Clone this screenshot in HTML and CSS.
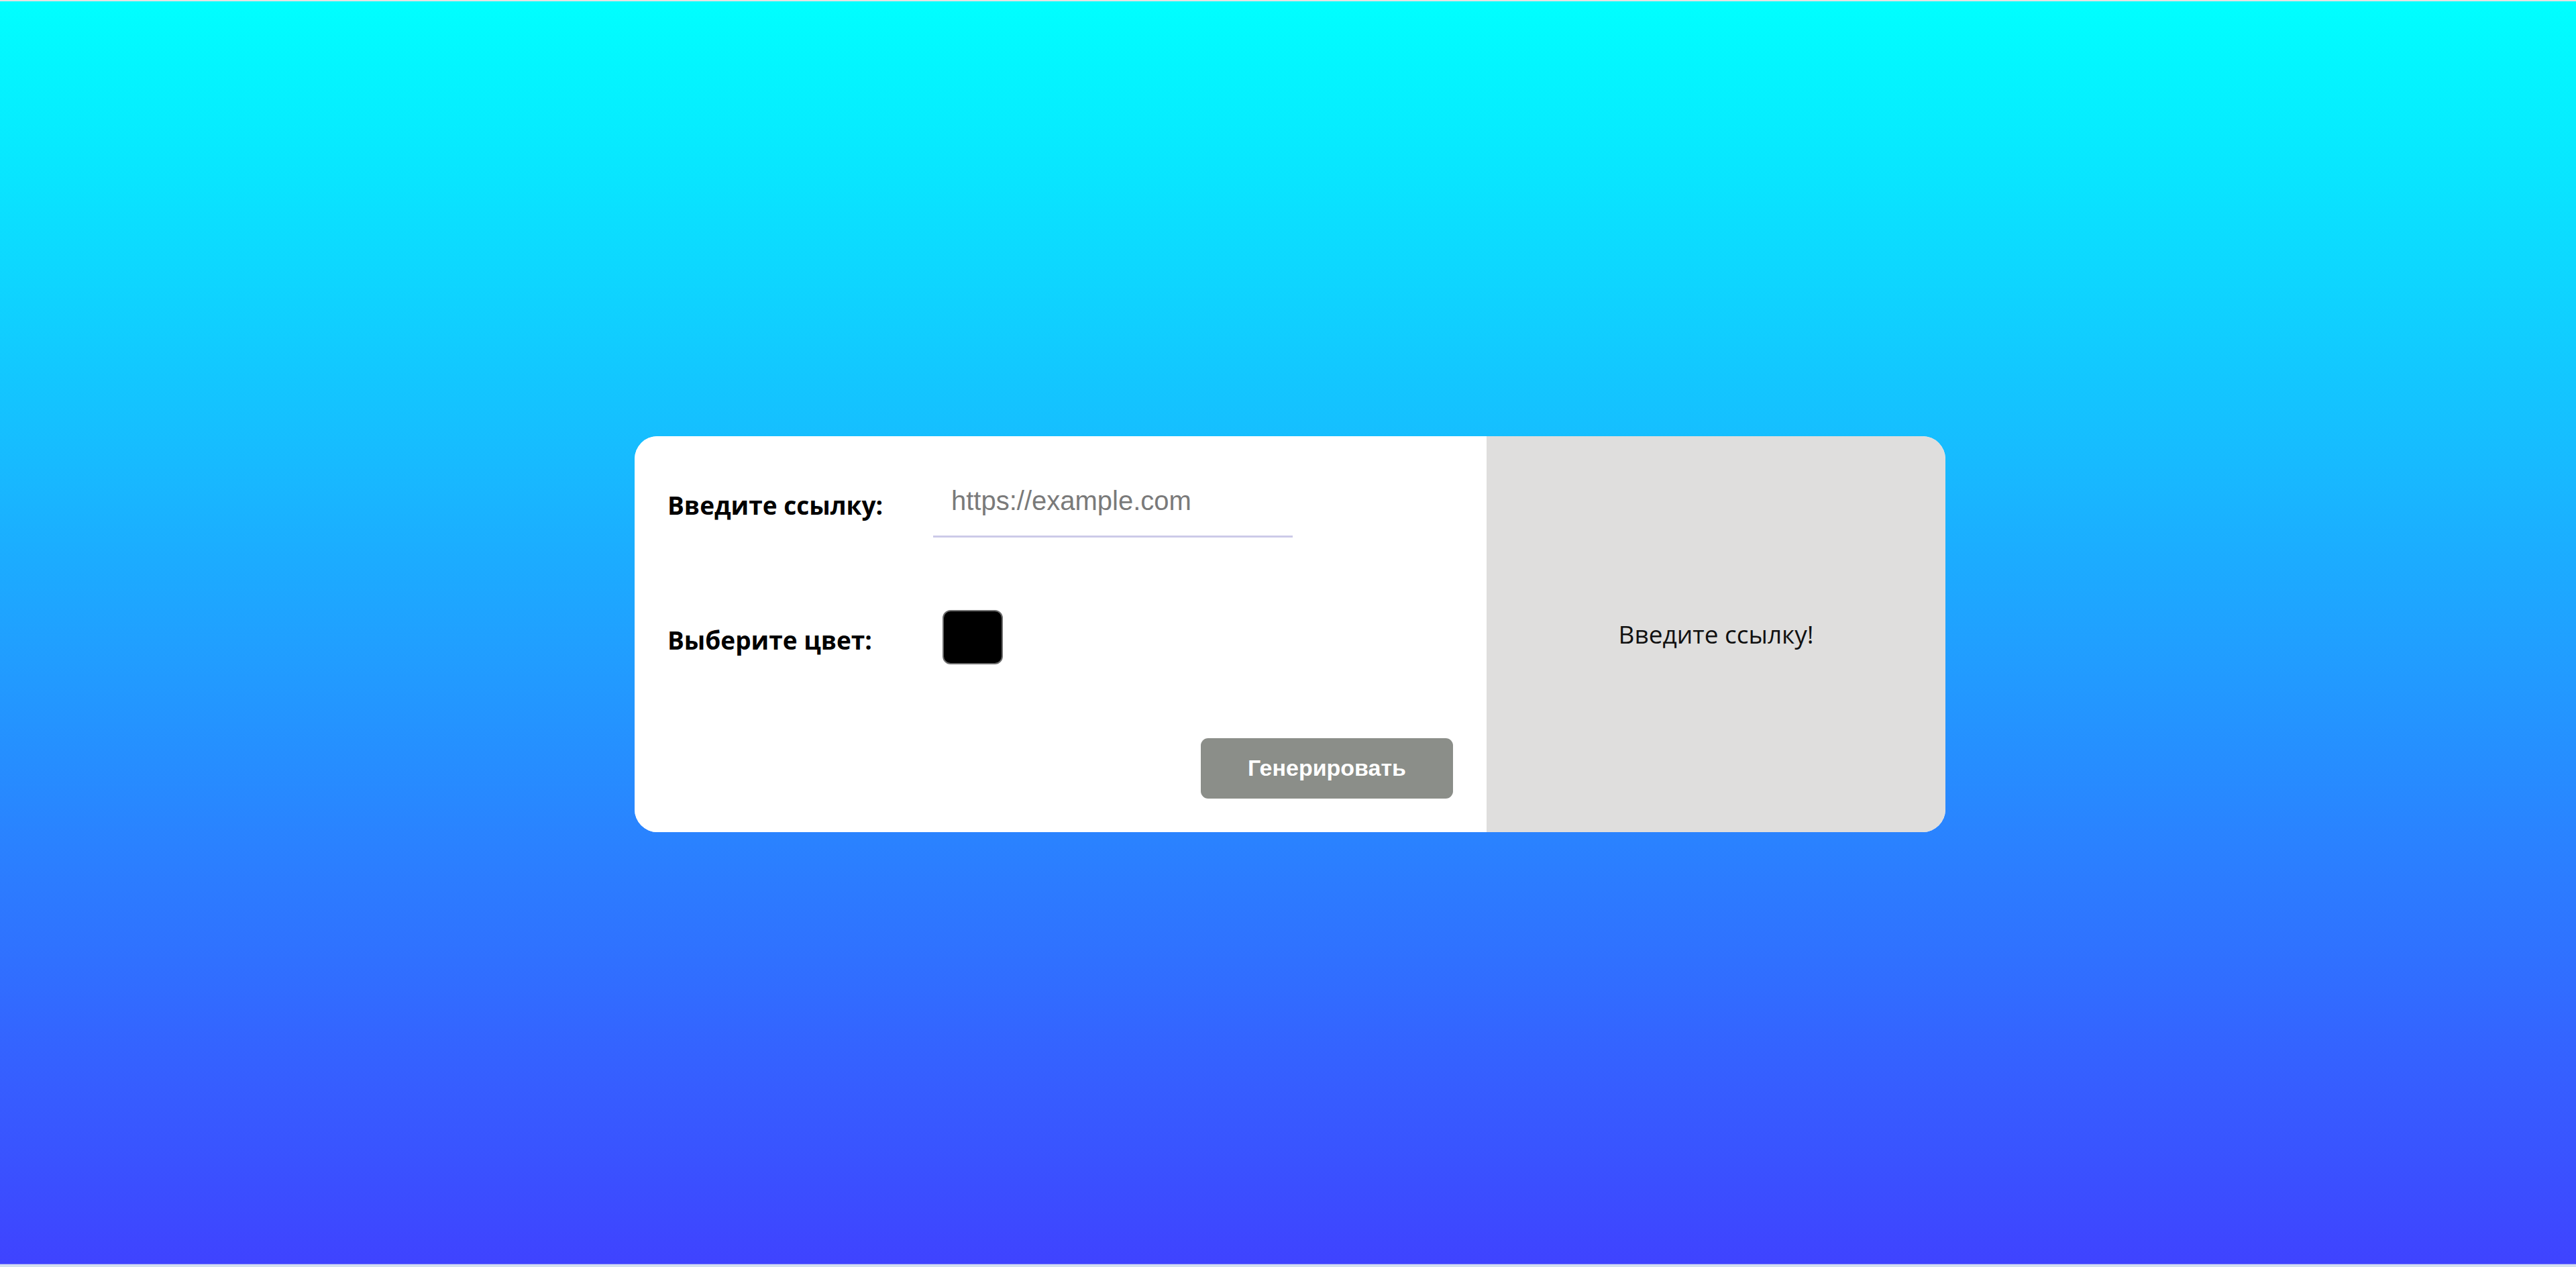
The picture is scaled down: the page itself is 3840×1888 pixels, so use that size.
FILE: index.html
```html
<!DOCTYPE html>
<html lang="ru">
<head>
<meta charset="utf-8">
<title>QR генератор</title>
<link rel="stylesheet" href="styles.css">
</head>
<body>
<div class="page">
  <div class="strip-top"></div>
  <main class="stage">
    <section class="card">
      <form class="form">
        <div class="row row-link">
          <label class="label" for="link">Введите ссылку:</label>
          <input class="link-input" id="link" type="text" placeholder="https://example.com">
        </div>
        <div class="row row-color">
          <label class="label">Выберите цвет:</label>
          <span class="swatch"></span>
        </div>
        <button type="button" class="btn">Генерировать</button>
      </form>
      <div class="result">Введите ссылку!</div>
    </section>
  </main>
  <div class="strip-bottom"></div>
</div>
</body>
</html>
```

FILE: styles.css
```css
* { box-sizing: border-box; }
html, body { margin: 0; padding: 0; }
body { font-family: "Open Sans", "Noto Sans", sans-serif; }

.page {
  height: 1888px;
  display: flex;
  flex-direction: column;
}
.strip-top { height: 2px; background: #e2e2e2; }
.strip-bottom { height: 5px; background: linear-gradient(#6a6cff 0 1px, #d4dff0 1px); }

.stage {
  flex: 1;
  display: flex;
  align-items: center;
  justify-content: center;
  background: linear-gradient(to bottom, #00ffff, #3f43ff);
  padding: 4px 0 0 6px;
}

.card {
  width: 1954px;
  height: 590px;
  display: flex;
  border-radius: 34px;
  overflow: hidden;
  background: #ffffff;
}

.form {
  width: 1270px;
  padding: 65px 50px 50px 49px;
  display: flex;
  flex-direction: column;
  background: #ffffff;
}

.row {
  display: grid;
  grid-template-columns: 396px 1fr;
  align-items: center;
}
.row-link { height: 86px; }
.row-color { margin-top: 108px; height: 81px; }

.label {
  font-family: "Open Sans", "Noto Sans", sans-serif;
  font-weight: 700;
  font-size: 37px;
  color: #000;
  position: relative;
  top: -5px;
}
.row-color .label { top: 4px; }

.link-input {
  width: 536px;
  height: 86px;
  border: none;
  border-bottom: 3px solid #cccae8;
  outline: none;
  padding: 0 0 20px 27px;
  font-family: "Liberation Sans", Arial, sans-serif;
  font-size: 40px;
  color: #333;
  background: transparent;
}
.link-input::placeholder { color: #7a7a7a; }

.swatch {
  display: block;
  width: 90px;
  height: 81px;
  margin-left: 14px;
  background: #000;
  border: 2px solid #6d6d6d;
  border-radius: 12px;
}

.btn {
  margin-top: auto;
  align-self: flex-end;
  width: 376px;
  height: 90px;
  border: none;
  border-radius: 11px;
  background: #8b8e89;
  color: #fff;
  font-family: "Liberation Sans", Arial, sans-serif;
  font-weight: 700;
  font-size: 34px;
}

.result {
  flex: 1;
  background: #dfdedd;
  display: flex;
  align-items: center;
  justify-content: center;
  font-family: "Open Sans", "Noto Sans", sans-serif;
  font-size: 37px;
  color: #111;
}
```
